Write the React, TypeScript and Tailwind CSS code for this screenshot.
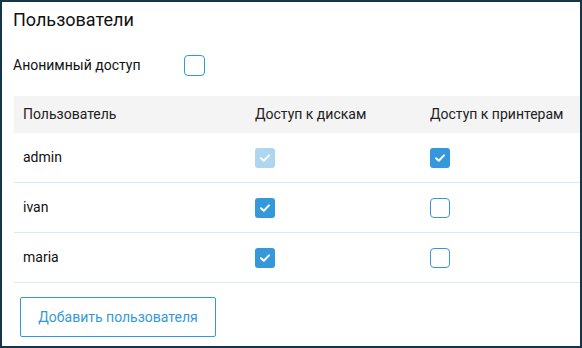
import React from 'react';

type Row = { name: string; disks: 'on' | 'off' | 'locked'; printers: 'on' | 'off' | 'locked' };

const rows: Row[] = [
  { name: 'admin', disks: 'locked', printers: 'on' },
  { name: 'ivan', disks: 'on', printers: 'off' },
  { name: 'maria', disks: 'on', printers: 'off' },
];

function Box({ state }: { state: 'on' | 'off' | 'locked' }) {
  if (state === 'off') {
    return <div className="w-5 h-5 rounded-[4px] border border-[#3498db] bg-white" />;
  }
  return (
    <div
      className={
        'w-5 h-5 rounded-[3px] flex items-center justify-center ' +
        (state === 'locked' ? 'bg-[#aed6f1]' : 'bg-[#3498db]')
      }
    >
      <svg width="12" height="10" viewBox="0 0 12 10" fill="none">
        <path d="M2 5.2 L4.8 7.8 L10 2.4" stroke="white" strokeWidth="2" strokeLinecap="round" strokeLinejoin="round" />
      </svg>
    </div>
  );
}

export default function App() {
  return (
    <div
      className="w-[582px] h-[348px] bg-[#15354d] p-[2px] overflow-hidden"
      style={{ fontFamily: 'Roboto, "Noto Sans", sans-serif' }}
    >
      <div className="w-full h-full bg-white overflow-hidden pl-[11px] pt-[4px]">
        <h1 className="text-[18px] leading-[28px] text-[#111]">Пользователи</h1>
        <div className="flex items-center mt-[20px] h-[22px]">
          <span className="text-[14px] text-[#111] w-[171px]">Анонимный доступ</span>
          <div className="w-[21px] h-[21px] rounded-[4px] border border-[#3498db]" />
        </div>
        <div className="mt-[20px] ml-[1px]">
          <div className="flex items-center h-[37px] bg-[#f4f4f4] text-[14px] text-[#222]">
            <div className="w-[231px] pl-[9px]">Пользователь</div>
            <div className="w-[175px] pl-[10px]">Доступ к дискам</div>
            <div className="pl-[10px] whitespace-nowrap">Доступ к принтерам</div>
          </div>
          {rows.map((r) => (
            <div key={r.name} className="flex items-center h-[50px] border-b border-[#dde8f0] text-[14px] text-[#111]">
              <div className="w-[231px] pl-[9px]">{r.name}</div>
              <div className="w-[175px] pl-[10px]">
                <Box state={r.disks} />
              </div>
              <div className="pl-[10px]">
                <Box state={r.printers} />
              </div>
            </div>
          ))}
        </div>
        <button className="mt-[14px] ml-[7px] w-[196px] h-[40px] border border-[#3498db] rounded-[2px] text-[14px] text-[#3498db] bg-white">
          Добавить пользователя
        </button>
      </div>
    </div>
  );
}
